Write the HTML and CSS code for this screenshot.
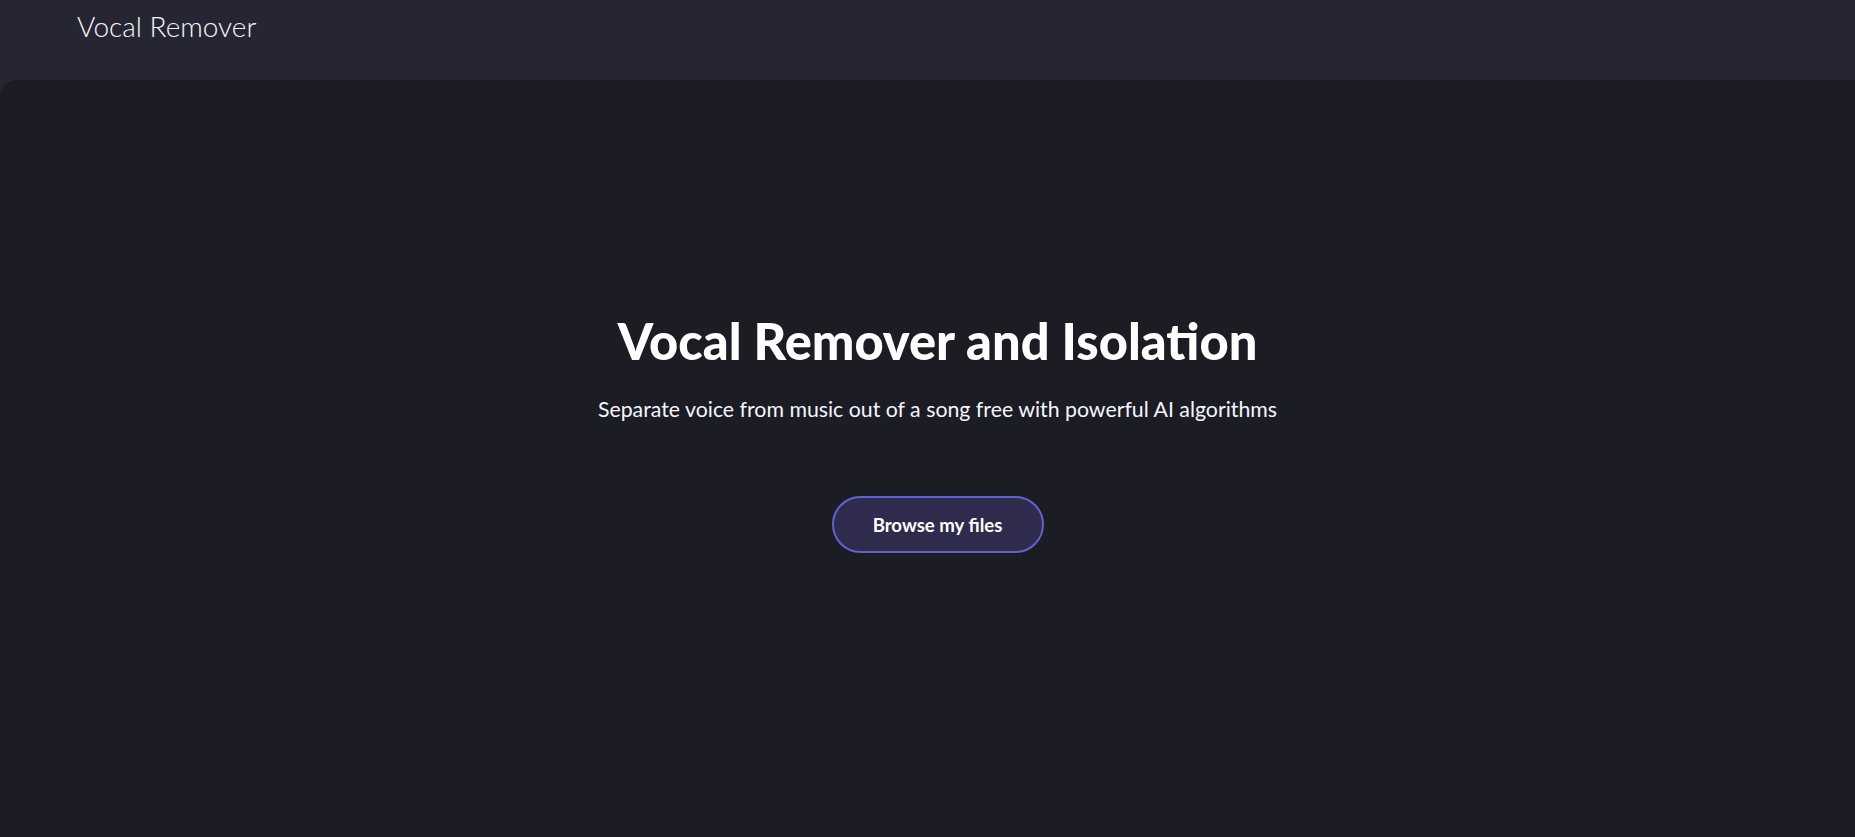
FILE: index.html
```html
<!DOCTYPE html>
<html lang="en">
<head>
<meta charset="utf-8">
<title>Vocal Remover</title>
<link rel="stylesheet" href="styles.css">
</head>
<body>
<header class="topbar">
  <span class="brand">Vocal Remover</span>
</header>
<main class="panel">
  <section class="hero">
    <h1 class="hero-title">Vocal Remover and Isolation</h1>
    <p class="hero-sub">Separate voice from music out of a song free with powerful AI algorithms</p>
    <button class="browse-btn" type="button">Browse my files</button>
  </section>
</main>
</body>
</html>
```
FILE: styles.css
```css
html, body {
  margin: 0;
  padding: 0;
  height: 100%;
}
body {
  background: #262633;
  font-family: Lato, "Open Sans", sans-serif;
  color: #ffffff;
  display: flex;
  flex-direction: column;
  overflow: hidden;
}
.topbar {
  height: 80px;
  flex: 0 0 80px;
  box-sizing: border-box;
  padding: 8px 0 0 77px;
}
.brand {
  font-size: 28px;
  font-weight: 300;
  line-height: 36px;
  color: #f4f6ff;
}
.panel {
  flex: 1;
  background: #1c1c24;
  border-top-left-radius: 18px;
  display: flex;
  justify-content: center;
  padding-left: 20px;
}
.hero {
  display: flex;
  flex-direction: column;
  align-items: center;
  padding-top: 231px;
}
.hero-title {
  margin: 0;
  font-size: 50.6px;
  font-weight: 900;
  line-height: 60px;
}
.hero-sub {
  margin: 24px 0 0;
  font-size: 21.3px;
  font-weight: 400;
  line-height: 28px;
  color: #f4f6ff;
}
.browse-btn {
  margin-top: 73px;
  width: 212px;
  height: 57px;
  border: 2px solid #6360d0;
  border-radius: 30px;
  background: #2f2b4c;
  color: #ffffff;
  font-family: Lato, "Open Sans", sans-serif;
  font-size: 18.6px;
  font-weight: 700;
  cursor: pointer;
}
```
